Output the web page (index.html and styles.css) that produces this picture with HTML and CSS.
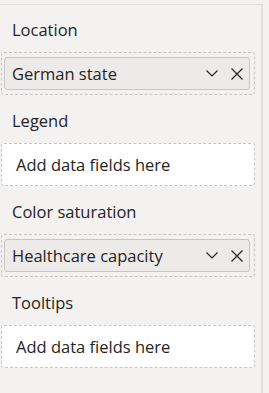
FILE: index.html
```html
<!DOCTYPE html>
<html lang="en">

<head>
  <meta charset="UTF-8">
  <meta name="viewport" content="width=device-width, initial-scale=1.0">
  <title>Field wells</title>
  <link rel="stylesheet" href="styles.css">
</head>

<body>
  <div class="pane">
    <div class="well">
      <div class="well-label">Location</div>
      <div class="drop-zone">
        <div class="field-pill">
          <span class="field-name">German state</span>
          <svg class="icon-chevron" width="12" height="7" viewBox="0 0 12 7"><path d="M0.5 0.5 L6 6 L11.5 0.5" fill="none" stroke="#252423" stroke-width="1.1"/></svg>
          <svg class="icon-close" width="12" height="12" viewBox="0 0 12 12"><path d="M0.5 0.5 L11.5 11.5 M11.5 0.5 L0.5 11.5" fill="none" stroke="#252423" stroke-width="1.2"/></svg>
        </div>
      </div>
    </div>

    <div class="well">
      <div class="well-label">Legend</div>
      <div class="drop-zone empty">Add data fields here</div>
    </div>

    <div class="well">
      <div class="well-label">Color saturation</div>
      <div class="drop-zone">
        <div class="field-pill">
          <span class="field-name">Healthcare capacity</span>
          <svg class="icon-chevron" width="12" height="7" viewBox="0 0 12 7"><path d="M0.5 0.5 L6 6 L11.5 0.5" fill="none" stroke="#252423" stroke-width="1.1"/></svg>
          <svg class="icon-close" width="12" height="12" viewBox="0 0 12 12"><path d="M0.5 0.5 L11.5 11.5 M11.5 0.5 L0.5 11.5" fill="none" stroke="#252423" stroke-width="1.2"/></svg>
        </div>
      </div>
    </div>

    <div class="well">
      <div class="well-label">Tooltips</div>
      <div class="drop-zone empty">Add data fields here</div>
    </div>
  </div>
</body>

</html>
```

FILE: styles.css
```css
body {
  font-family: 'Open Sans', sans-serif;
  margin: 0;
  padding: 0;
  background-color: #f3f2f1;
  color: #252423;
  overflow: hidden;
}

.pane {
  width: 263px;
  height: 393px;
  margin-top: 4px;
  padding: 14px 0 0 1px;
  border-top: 1px solid #e1dfdd;
  border-right: 2px solid #e1dfdd;
  box-sizing: border-box;
}

.well {
  margin-bottom: 15px;
}

.well-label {
  font-size: 16.5px;
  line-height: 22px;
  padding-left: 11px;
  margin-bottom: 11px;
}

.drop-zone {
  width: 254px;
  height: 43px;
  border: 1px dashed #c8c6c4;
  border-radius: 3px;
  padding: 4px 4px 4px 2px;
  box-sizing: border-box;
}

.drop-zone.empty {
  background-color: #ffffff;
  padding: 0 0 0 14px;
  font-size: 16.5px;
  line-height: 41px;
  color: #252423;
}

.field-pill {
  display: flex;
  align-items: center;
  height: 33px;
  padding: 0 6px 0 7px;
  background-color: #edebe9;
  border: 1px solid #c8c6c4;
  border-radius: 3px;
  box-sizing: border-box;
}

.field-name {
  flex: 1;
  font-size: 16.5px;
  line-height: 31px;
  white-space: nowrap;
}

.icon-chevron {
  margin-right: 13px;
}
```
